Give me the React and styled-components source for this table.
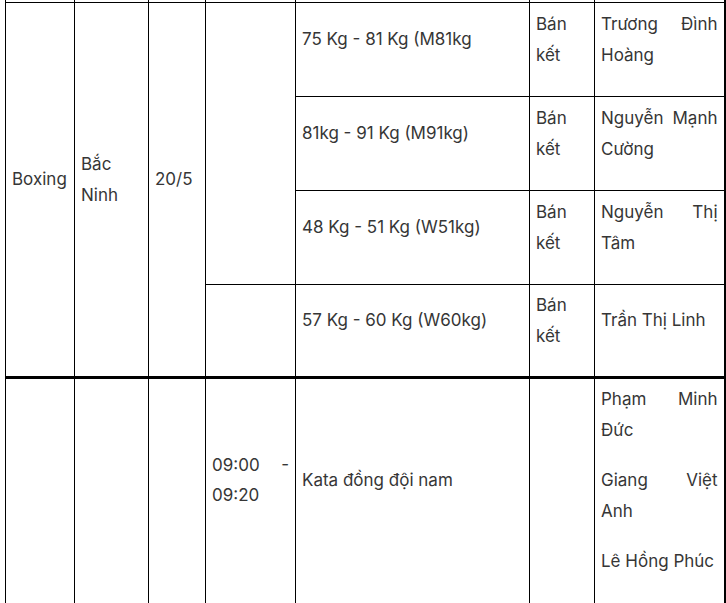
import React from "react";
import styled, { createGlobalStyle } from "styled-components";

const Global = createGlobalStyle`
  html, body { margin: 0; padding: 0; background: #fff; }
  body { font-family: Inter, "Noto Sans", sans-serif; color: #363636; overflow: hidden; }
`;

const Frame = styled.div`
  width: 726px;
  height: 603px;
  overflow: hidden;
  padding-left: 5px;
  box-sizing: border-box;
`;

const Table = styled.table`
  border-collapse: collapse;
  table-layout: fixed;
  width: 719px;
  font-size: 17px;
  line-height: 30.6px;
`;

const Cell = styled.td`
  border: 1px solid #000;
  border-top-width: ${(p) => (p.$thick ? "3px" : "1px")};
  border-right-width: ${(p) => (p.$last ? "2px" : "1px")};
  padding: ${(p) => (p.$thick ? "5px 6px 8px" : "3px 6px")};
  vertical-align: middle;
  text-align: justify;
  height: ${(p) => p.$h || "auto"};
  box-sizing: border-box;
`;

const Stub = styled.td`
  border-left: 1px solid #000;
  border-right: ${(p) => (p.$last ? "2px" : "1px")} solid #000;
  border-top: none;
  padding: 0;
  height: 2px;
`;

const P = styled.p`
  margin: 0 0 20px;
`;

const widths = [69, 74, 57, 90, 234, 65, 130];

const weights = [
  { w: "75 Kg - 81 Kg (M81kg", r: "Bán kết", n: "Trương Đình Hoàng" },
  { w: "81kg - 91 Kg (M91kg)", r: "Bán kết", n: "Nguyễn Mạnh Cường" },
  { w: "48 Kg - 51 Kg (W51kg)", r: "Bán kết", n: "Nguyễn Thị Tâm" },
  { w: "57 Kg - 60 Kg (W60kg)", r: "Bán kết", n: "Trần Thị Linh" },
];

export default function App() {
  return (
    <Frame>
      <Global />
      <Table>
        <colgroup>
          {widths.map((w, i) => (
            <col key={i} style={{ width: w }} />
          ))}
        </colgroup>
        <tbody>
          <tr>
            {widths.map((_, i) => (
              <Stub key={i} $last={i === widths.length - 1} />
            ))}
          </tr>
          {weights.map((row, i) => (
            <tr key={i}>
              {i === 0 && (
                <>
                  <Cell rowSpan={4}><P>Boxing</P></Cell>
                  <Cell rowSpan={4}><P>Bắc Ninh</P></Cell>
                  <Cell rowSpan={4}><P>20/5</P></Cell>
                  <Cell rowSpan={3} />
                </>
              )}
              {i === 3 && <Cell />}
              <Cell $h={i === 3 ? "93px" : "94px"}><P>{row.w}</P></Cell>
              <Cell><P>{row.r}</P></Cell>
              <Cell $last><P>{row.n}</P></Cell>
            </tr>
          ))}
          <tr>
            <Cell $thick />
            <Cell $thick />
            <Cell $thick />
            <Cell $thick><P>09:00 - 09:20</P></Cell>
            <Cell $thick><P>Kata đồng đội nam</P></Cell>
            <Cell $thick />
            <Cell $thick $last>
              <P>Phạm Minh Đức</P>
              <P>Giang Việt Anh</P>
              <P>Lê Hồng Phúc</P>
            </Cell>
          </tr>
        </tbody>
      </Table>
    </Frame>
  );
}
